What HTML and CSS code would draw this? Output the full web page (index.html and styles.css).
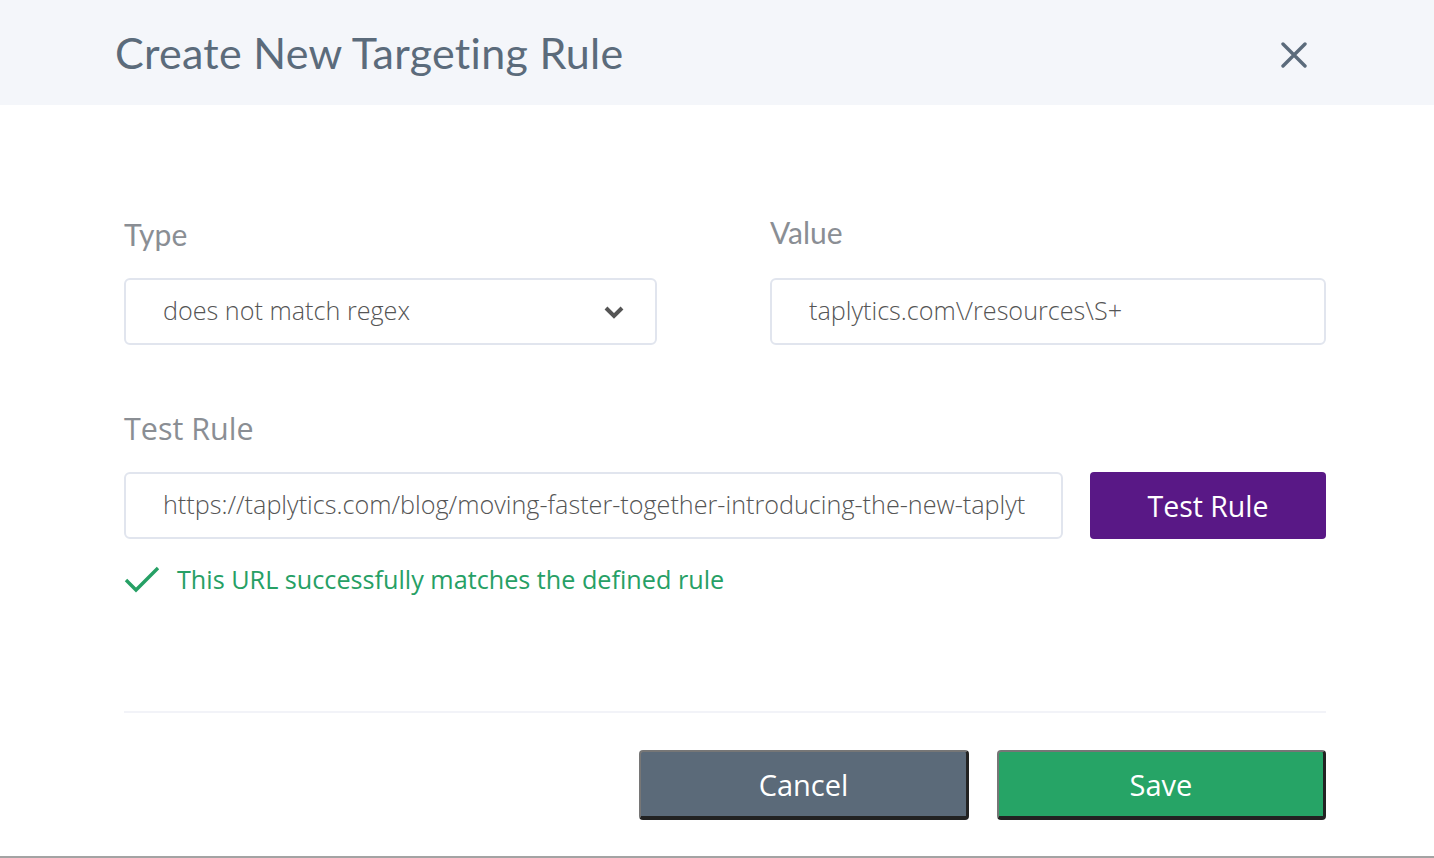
FILE: index.html
```html
<!DOCTYPE html>
<html lang="en">
<head>
    <meta charset="UTF-8">
    <title>Create New Targeting Rule</title>
    <link rel="stylesheet" href="styles.css">
</head>
<body>
    <div class="modal">
        <div class="modal-header">
            <h1>Create New Targeting Rule</h1>
            <a class="close">
                <svg width="26" height="26" viewBox="0 0 26 26">
                    <path d="M2 2 L24 24 M24 2 L2 24" stroke="#5b6b7b" stroke-width="3.4" stroke-linecap="round"/>
                </svg>
            </a>
        </div>
        <div class="modal-body">
            <div class="fields">
                <div class="field">
                    <label class="label-alt">Type</label>
                    <div class="select">
                        <span class="text">does not match regex</span>
                        <svg width="22" height="14" viewBox="0 0 22 14">
                            <polyline points="3,3 11,11 19,3" fill="none" stroke="#555" stroke-width="4" stroke-linejoin="miter"/>
                        </svg>
                    </div>
                </div>
                <div class="field">
                    <label class="label-alt label-value">Value</label>
                    <div class="input"><span class="text">taplytics.com\/resources\S+</span></div>
                </div>
            </div>
            <label class="label">Test Rule</label>
            <div class="test-row">
                <div class="input test-input"><span class="text">https://taplytics.com/blog/moving-faster-together-introducing-the-new-taplytics-platform</span></div>
                <a class="btn-purple">Test Rule</a>
            </div>
            <div class="success">
                <svg width="36" height="28" viewBox="0 0 36 28">
                    <polyline points="2,15 12,25 34,3" fill="none" stroke="#26a065" stroke-width="3.4"/>
                </svg>
                <span>This URL successfully matches the defined rule</span>
            </div>
            <div class="footer">
                <a class="btn cancel">Cancel</a>
                <a class="btn save">Save</a>
            </div>
        </div>
    </div>
</body>
</html>
```

FILE: styles.css
```css
body {
    margin: 0;
    background: #fff;
    font-family: "Open Sans", Arial, sans-serif;
}
.modal {
    height: 856px;
    border-bottom: 2px solid #a3a3a3;
    background: #fff;
}
.modal-header {
    height: 105px;
    background: #f4f6fa;
    display: flex;
    align-items: center;
    justify-content: space-between;
    padding: 0 127px 0 115px;
}
.modal-header h1 {
    margin: 0;
    font-family: Lato, "Noto Sans", sans-serif;
    font-weight: 400;
    font-size: 43px;
    color: #5b6b7b;
    letter-spacing: 0.3px;
}
.close {
    display: flex;
    position: relative;
    top: 2px;
}
.modal-body {
    padding: 111px 108px 0 124px;
}
.fields {
    display: grid;
    grid-template-columns: 533px 1fr;
    column-gap: 113px;
}
.label-alt {
    display: block;
    font-family: Lato, "Noto Sans", sans-serif;
    font-size: 30px;
    line-height: 36px;
    color: #8a8e94;
    margin-bottom: 26px;
}
.label-value {
    position: relative;
    top: -2px;
}
.label {
    display: block;
    font-size: 30.5px;
    line-height: 36px;
    color: #8a8e94;
    margin: 65px 0 26px;
}
.select, .input {
    height: 63px;
    box-sizing: border-box;
    height: 67px;
    border: 2px solid #e1e5ee;
    border-radius: 6px;
    display: flex;
    align-items: center;
    padding: 0 30px 3px 37px;
    font-size: 25.2px;
    font-weight: 300;
    color: #555;
}
.select svg {
    margin-top: 3px;
}
.text {
    flex: 1;
    min-width: 0;
    white-space: nowrap;
    overflow: hidden;
}
.test-row {
    display: flex;
    gap: 27px;
}
.test-input {
    flex: 1;
    min-width: 0;
    padding-right: 36px;
}
.btn-purple {
    flex-shrink: 0;
    width: 236px;
    height: 67px;
    background: #591886;
    border-radius: 4px;
    color: #fff;
    font-size: 28.5px;
    display: flex;
    align-items: center;
    justify-content: center;
}
.success {
    display: flex;
    align-items: center;
    gap: 17px;
    margin-top: 23px;
    color: #26a065;
    font-size: 25.2px;
    line-height: 34px;
}
.footer {
    margin-top: 115px;
    border-top: 2px solid #f2f3f8;
    padding-top: 37px;
    display: flex;
    justify-content: flex-end;
    gap: 28px;
}
.btn {
    width: 324px;
    height: 64px;
    display: flex;
    align-items: center;
    justify-content: center;
    color: #fff;
    font-size: 29px;
    border-radius: 4px;
    border-style: solid;
    border-width: 2px 3px 4px 2px;
    border-color: #767676 #222 #222 #767676;
}
.cancel {
    background: #5b6a79;
    width: 325px;
}
.save {
    background: #26a466;
}
```
